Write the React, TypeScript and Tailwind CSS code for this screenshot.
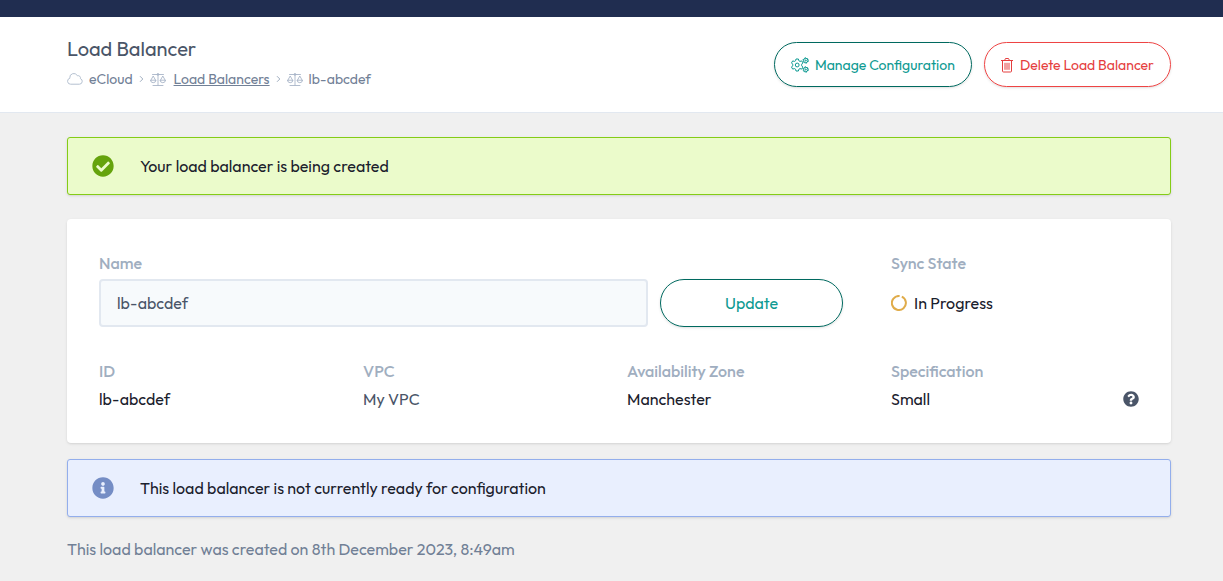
import { useState, type ReactNode } from "react";
import { FaCheckCircle, FaInfoCircle, FaQuestionCircle } from "react-icons/fa";

function CloudIcon() {
  return (
    <svg width="16" height="12" viewBox="0 0 16 12" fill="none" stroke="currentColor" strokeWidth="1" strokeLinejoin="round" aria-hidden="true">
      <path d="M3.6 11.2h8.8a2.9 2.9 0 0 0 1-5.6 2.3 2.3 0 0 0-3-2.8A4 4 0 0 0 2.8 4.9v.4a3 3 0 0 0 .8 5.9z" />
    </svg>
  );
}

function ScaleIcon() {
  return (
    <svg width="16" height="13" viewBox="0 0 16 13" fill="none" stroke="currentColor" strokeWidth="0.9" strokeLinecap="round" strokeLinejoin="round" aria-hidden="true">
      <path d="M2.5 1.5h11M8 .5v12M3 12.5h10" />
      <circle cx="8" cy="1.5" r="0.9" />
      <path d="M.6 7.6 3.2 3l2.6 4.6M.6 7.6a2.6 2.1 0 0 0 5.2 0z" />
      <path d="M10.2 7.6 12.8 3l2.6 4.6M10.2 7.6a2.6 2.1 0 0 0 5.2 0z" />
    </svg>
  );
}

function ChevronIcon() {
  return (
    <svg width="5" height="8" viewBox="0 0 5 8" fill="none" stroke="currentColor" strokeWidth="1" aria-hidden="true">
      <path d="M1 1.2 3.8 4 1 6.8" />
    </svg>
  );
}

function CogsIcon() {
  return (
    <svg width="18" height="16" viewBox="0 0 18 16" fill="none" stroke="currentColor" strokeWidth="1" strokeLinejoin="round" aria-hidden="true">
      <path d="M5 2h2.4l.4 1.7 1.2.7 1.7-.5 1.2 2-1.2 1.3v1.6l1.2 1.3-1.2 2-1.7-.5-1.2.7L7.4 14H5l-.4-1.7-1.2-.7-1.7.5-1.2-2 1.2-1.3V7.2L.5 5.9l1.2-2 1.7.5 1.2-.7z" />
      <circle cx="6.2" cy="8" r="1.9" />
      <circle cx="14.7" cy="3.5" r="2.2" />
      <circle cx="14.7" cy="3.500" r="2.700" strokeDasharray="1.400 1.430" />
      <circle cx="14.700" cy="3.500" r="0.600" />
      <circle cx="14.700" cy="12.500" r="2.200" />
      <circle cx="14.700" cy="12.500" r="2.700" strokeDasharray="1.400 1.430" />
      <circle cx="14.700" cy="12.500" r="0.600" />
    </svg>
  );
}

function TrashIcon() {
  return (
    <svg width="12" height="16" viewBox="0 0 12 16" fill="none" stroke="currentColor" strokeWidth="1" strokeLinejoin="round" aria-hidden="true">
      <path d="M0 3.5h12M1.5 3.5V14a1 1 0 0 0 1 1h7a1 1 0 0 0 1-1V3.5M3.5 3.5l1-2h3l1 2M4 5.8v7M6 5.800v7M8 5.800v7" />
    </svg>
  );
}

function SpinnerIcon() {
  return (
    <svg width="16" height="16" viewBox="0 0 16 16" fill="none" stroke="#e0ac4a" strokeWidth="2" aria-hidden="true">
      <path d="M10.8 1.6a7 7 0 1 1-2.2-.6" />
    </svg>
  );
}

const alertStyles = {
  success: "border-[#84cc16] bg-[#ebfbcb]",
  info: "border-[#93aeec] bg-[#e9effe]",
};

type AlertProps = {
  kind: keyof typeof alertStyles;
  icon: ReactNode;
  children: ReactNode;
};

function Alert({ kind, icon, children }: AlertProps) {
  return (
    <div role="status" className={`flex items-center rounded-[3px] border px-6 py-4 shadow-sm ${alertStyles[kind]}`}>
      {icon}
      <p className="ml-[26px]">{children}</p>
    </div>
  );
}

const details = [
  { label: "ID", value: "lb-abcdef" },
  { label: "VPC", value: "My VPC", muted: true },
  { label: "Availability Zone", value: "Manchester" },
  { label: "Specification", value: "Small", help: true },
];

export default function App() {
  const [name, setName] = useState("lb-abcdef");

  return (
    <div className="min-h-screen bg-[#f0f0f0] font-['Outfit','Lato',sans-serif] text-base text-[#1a202c]">
      <div className="h-[17px] bg-[#202d50]" />

      <header className="flex items-center justify-between border-b border-[#e2e8f0] bg-white py-5 pl-[67px] pr-[52px]">
        <div className="pb-[3px]">
          <h1 className="text-xl/6 text-[#4a5568]">Load Balancer</h1>
          <nav aria-label="Breadcrumb" className="mt-2">
            <ol className="flex items-center text-sm text-[#718096]">
              <li className="flex items-center gap-1.5">
                <span className="text-[#b4c0d0]"><CloudIcon /></span>
                eCloud
              </li>
              <li className="mx-1.5 text-[#a0aec0]" aria-hidden="true"><ChevronIcon /></li>
              <li className="flex items-center gap-2">
                <span className="text-[#a9b6c8]"><ScaleIcon /></span>
                <a href="#load-balancers" className="underline">Load Balancers</a>
              </li>
              <li className="mx-1.5 text-[#a0aec0]" aria-hidden="true"><ChevronIcon /></li>
              <li className="flex items-center gap-1.5">
                <span className="text-[#a9b6c8]"><ScaleIcon /></span>
                lb-abcdef
              </li>
            </ol>
          </nav>
        </div>
        <div className="flex gap-3">
          <button type="button" className="flex h-[45px] min-w-[198px] items-center justify-center gap-1.5 rounded-full border border-[#00695f] px-4 text-sm text-[#0d9a92] shadow-sm">
            <CogsIcon />
            Manage Configuration
          </button>
          <button type="button" className="flex h-[45px] min-w-[187px] items-center justify-center gap-[7px] rounded-full border border-[#ee4444] px-4 text-sm text-[#e53e3e] shadow-sm">
            <TrashIcon />
            Delete Load Balancer
          </button>
        </div>
      </header>

      <main className="pb-5 pl-[67px] pr-[52px] pt-6">
        <Alert kind="success" icon={<FaCheckCircle size={22} color="#65a30d" />}>
          Your load balancer is being created
        </Alert>

        <section className="mb-4 mt-6 grid grid-cols-4 gap-x-4 gap-y-8 rounded bg-white p-8 shadow-sm">
          <form className="col-span-3 pr-8" onSubmit={(e) => e.preventDefault()}>
            <label htmlFor="name" className="block font-medium text-[#a0aec0]">Name</label>
            <div className="mt-1 grid grid-cols-[3fr_1fr] gap-3">
              <input
                id="name"
                value={name}
                onChange={(e) => setName(e.target.value)}
                className="h-12 w-full rounded border-2 border-[#e2e8f0] bg-[#f7fafc] px-4 text-[#4a5568]"
              />
              <button type="submit" className="h-12 rounded-full border border-[#00695f] text-[#0d9a92] shadow-sm">
                Update
              </button>
            </div>
          </form>
          <div>
            <h2 className="font-medium text-[#a0aec0]">Sync State</h2>
            <p className="mt-1 flex h-12 items-center gap-[7px]">
              <SpinnerIcon />
              In Progress
            </p>
          </div>

          {details.map((item) => (
            <div key={item.label}>
              <h2 className="font-medium text-[#a0aec0]">{item.label}</h2>
              <div className="mt-1 flex items-center justify-between">
                <p className={item.muted ? "text-[#4a5568]" : ""}>{item.value}</p>
                {item.help && (
                  <button type="button" aria-label="About specifications" className="text-[#4a5568]">
                    <FaQuestionCircle size={16} />
                  </button>
                )}
              </div>
            </div>
          ))}
        </section>

        <Alert kind="info" icon={<FaInfoCircle size={22} color="#758dc5" />}>
          This load balancer is not currently ready for configuration
        </Alert>

        <p className="mt-5 text-[#718096]">This load balancer was created on 8th December 2023, 8:49am</p>
      </main>
    </div>
  );
}
